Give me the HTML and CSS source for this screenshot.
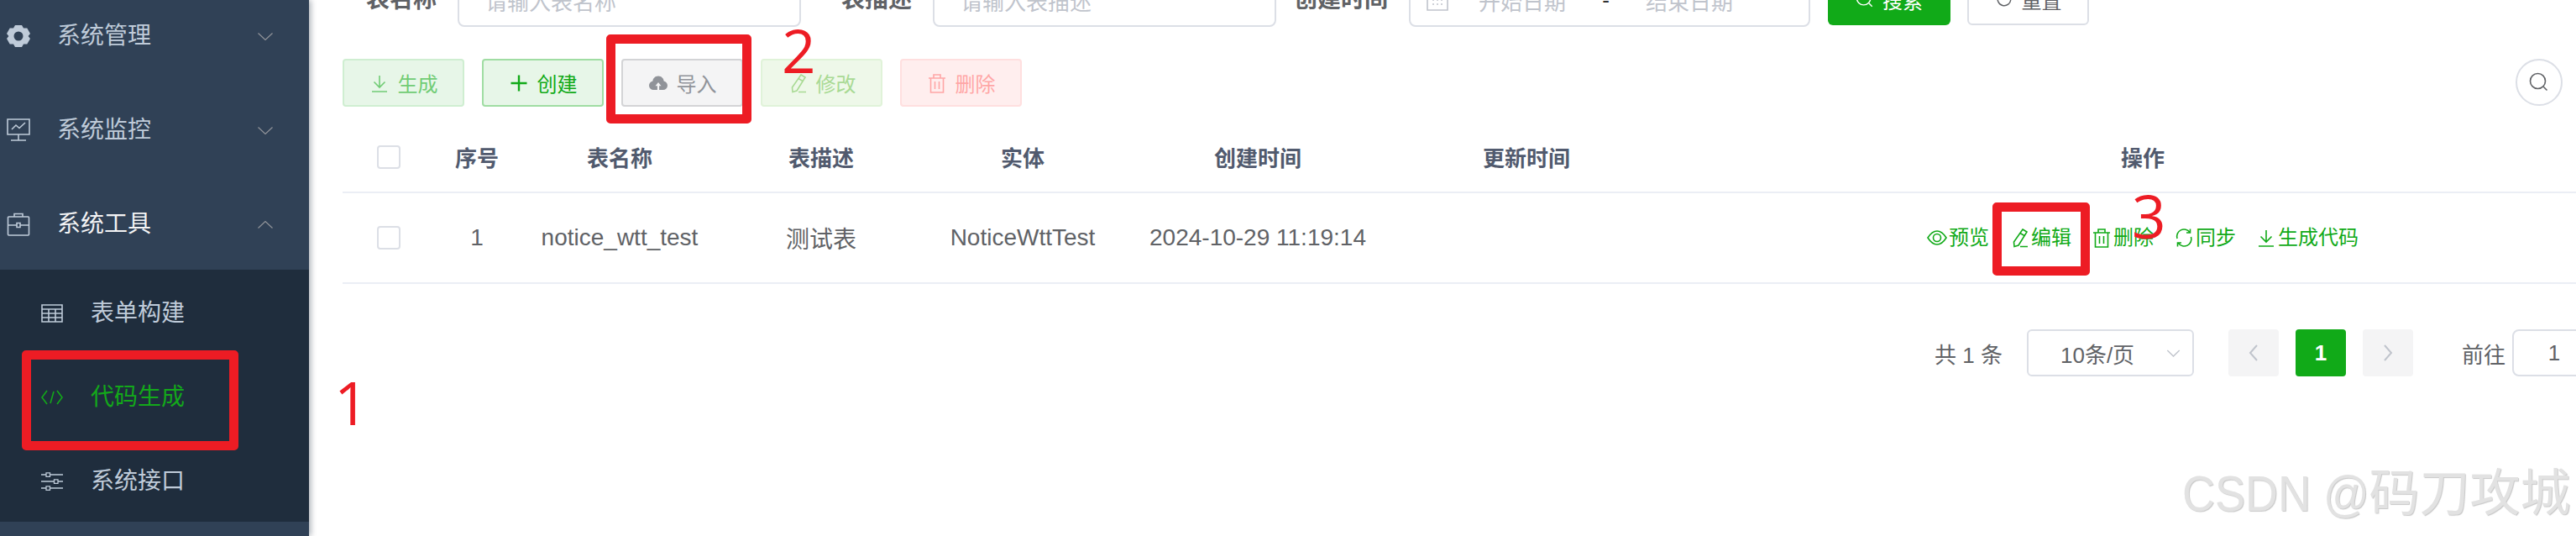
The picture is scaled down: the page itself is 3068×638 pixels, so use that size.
FILE: index.html
```html
<!DOCTYPE html>
<html lang="zh-CN">
<head>
<meta charset="utf-8">
<title>代码生成</title>
<link rel="stylesheet" href="styles.css">
</head>
<body>
<div class="app">
  <aside class="sidebar">
    <div class="menu-item"><svg class="mi" viewBox="0 0 28 28"><path fill="#bfcbd9" fill-rule="evenodd" d="M10 1h8l2 3.600 4.300 0 3.700 6.400-2.400 3 2.400 3-3.700 6.400-4.300 0-2 3.600h-8l-2-3.600-4.300 0-3.700-6.400 2.400-3-2.400-3 3.700-6.400 4.300 0zM14 8.500a5.500 5.500 0 1 0 0 11 5.500 5.500 0 0 0 0-11z"/></svg><span class="mt">系统管理</span><svg class="chev" viewBox="0 0 18 9"><path d="M.5.500 9 8.500 17.500.5"/></svg></div>
    <div class="menu-item"><svg class="mi" viewBox="0 0 28 28"><path class="st" d="M1 1h26v18H1zM14 19v7M5 26h18M6 13l5-5 4 3.500L22 5"/></svg><span class="mt">系统监控</span><svg class="chev" viewBox="0 0 18 9"><path d="M.5.500 9 8.500 17.500.5"/></svg></div>
    <div class="menu-item on"><svg class="mi" viewBox="0 0 28 28"><path class="st" d="M2.500 5h23a1 1 0 0 1 1 1v20a1 1 0 0 1-1 1h-23a1 1 0 0 1-1-1V6a1 1 0 0 1 1-1zM9 5V1.500h10V5M1.500 15h11M16 15h10.500M12 12.500h4v5h-4z"/></svg><span class="mt">系统工具</span><svg class="chev" viewBox="0 0 18 9"><path d="M.5 8.500 9 .5l8.500 8"/></svg></div>
    <div class="sub">
      <div class="sub-item"><svg class="si" viewBox="0 0 26 22"><path class="st" d="M1 1h24v20H1zM1 6h24M1 11h24M1 16h24M9 6v15M17 6v15"/></svg><span class="mt">表单构建</span></div>
      <div class="sub-item active"><svg class="si" viewBox="0 0 26 18"><path class="st" d="M7 1 1 9l6 8M19 1l6 8-6 8M15 2l-4 14"/></svg><span class="mt">代码生成</span></div>
      <div class="sub-item"><svg class="si" viewBox="0 0 26 22"><path class="st thin" d="M0 3h26M0 11h26M0 19h26"/><path class="knob" d="M6 .8h4.500v4.500H6zM15.500 8.800H20v4.500h-4.500zM6 16.800h4.500v4.500H6z"/></svg><span class="mt">系统接口</span></div>
    </div>
  </aside>

  <main class="main">
    <form class="search">
      <label class="lbl">表名称</label>
      <div class="field f1"><span class="ph">请输入表名称</span></div>
      <label class="lbl l2">表描述</label>
      <div class="field f2"><span class="ph">请输入表描述</span></div>
      <label class="lbl l3">创建时间</label>
      <div class="field f3">
        <svg class="cal" viewBox="0 0 26 26"><path class="st" d="M1 3h24v22H1zM1 9h24M7 13h2M12 13h2M17 13h2M7 18h2M12 18h2M17 18h2"/></svg>
        <span class="ph">开始日期</span><span class="dash">-</span><span class="ph">结束日期</span>
      </div>
      <div class="sbtn primary"><svg class="bi" viewBox="0 0 24 24"><path class="st" d="M17.500 17.500l4 4M10.500 1.500a9 9 0 1 0 0 18 9 9 0 0 0 0-18z"/></svg>搜索</div>
      <div class="sbtn plain"><svg class="bi" viewBox="0 0 24 24"><path class="st" d="M20.500 12a8.500 8.500 0 1 1-2.500-6M18 1.500V6h-4.500"/></svg>重置</div>
    </form>

    <div class="toolbar">
      <div class="btn b-gen"><svg class="bi" viewBox="0 0 24 24"><path class="st" d="M12 3v14M5.500 10.500l6.500 6.500 6.500-6.500M3 22h18"/></svg>生成</div>
      <div class="btn b-new"><svg class="bi" viewBox="0 0 24 24"><path class="st thick" d="M12 2.500v19M2.500 12h19"/></svg>创建</div>
      <div class="btn b-imp"><svg class="bi" viewBox="0 0 24 24"><path fill="currentColor" fill-rule="evenodd" d="M12 3.500c3.800 0 6.500 3 6.600 6 2.700.6 4.400 2.800 4.400 5.200a5.300 5.300 0 0 1-5.300 5.300H6.300A5.300 5.300 0 0 1 1 14.700c0-2.400 1.700-4.600 4.400-5.200.1-3 2.800-6 6.600-6zM12 11l-3.500 4.200h2.400V20h2.200v-4.800h2.400z"/></svg>导入</div>
      <div class="btn b-edit"><svg class="bi" viewBox="0 0 24 24"><path class="st" d="M16 2l5 3-10 16-5 1.500L5.500 17zM13 6.500l5 3M13 22.500h9"/></svg>修改</div>
      <div class="btn b-del"><svg class="bi" viewBox="0 0 24 24"><path class="st" d="M2 6h20M8 6V2h8v4M4.500 6v17h15V6M9.500 10v9M14.500 10v9"/></svg>删除</div>
      <div class="circle"><svg viewBox="0 0 24 24"><path class="st" d="M17.500 17.500l4 4M10.500 1.500a9 9 0 1 0 0 18 9 9 0 0 0 0-18z"/></svg></div>
    </div>

    <table class="grid">
      <colgroup>
        <col class="c1"><col class="c2"><col class="c3"><col class="c3"><col class="c3"><col class="c4"><col class="c4"><col>
      </colgroup>
      <thead>
        <tr><th><span class="check"></span></th><th>序号</th><th>表名称</th><th>表描述</th><th>实体</th><th>创建时间</th><th>更新时间</th><th>操作</th></tr>
      </thead>
      <tbody>
        <tr>
          <td><span class="check"></span></td><td>1</td><td>notice_wtt_test</td><td>测试表</td><td>NoticeWttTest</td><td>2024-10-29 11:19:14</td><td></td>
          <td>
            <div class="ops">
              <span class="op"><svg viewBox="0 0 24 24"><path class="st" d="M1 12C4.500 6.500 8 4 12 4s7.500 2.500 11 8c-3.500 5.500-7 8-11 8s-7.500-2.500-11-8zM12 7.500a4.500 4.500 0 1 0 0 9 4.500 4.500 0 0 0 0-9z"/></svg>预览</span>
              <span class="op"><svg viewBox="0 0 24 24"><path class="st" d="M16 2l5 3-10 16-5 1.500L5.500 17zM13 6.500l5 3M13 22.500h9"/></svg>编辑</span>
              <span class="op"><svg viewBox="0 0 24 24"><path class="st" d="M2 6h20M8 6V2h8v4M4.500 6v17h15V6M9.500 10v9M14.500 10v9"/></svg>删除</span>
              <span class="op"><svg viewBox="0 0 24 24"><path class="st" d="M4 13a8.500 8.500 0 0 1 15-7.500M20.500 11A8.500 8.500 0 0 1 5.500 18.500M19.500 1.500V6H15M4.500 22.500V18H9"/></svg>同步</span>
              <span class="op"><svg viewBox="0 0 24 24"><path class="st" d="M12 3v14M5.500 10.500l6.500 6.500 6.500-6.500M3 22h18"/></svg>生成代码</span>
            </div>
          </td>
        </tr>
      </tbody>
    </table>

    <div class="pager">
      <span class="total">共 1 条</span>
      <div class="psel">10条/页<svg viewBox="0 0 18 10"><path d="M1 1l8 8 8-8"/></svg></div>
      <div class="pbtn"><svg viewBox="0 0 12 20"><path d="M10 1 2 10l8 9"/></svg></div>
      <div class="pbtn cur">1</div>
      <div class="pbtn last"><svg viewBox="0 0 12 20"><path d="M2 1l8 9-8 9"/></svg></div>
      <span class="goto">前往</span>
      <div class="pinput">1</div>
      <span class="pageu">页</span>
    </div>
  </main>
</div>

<div class="mark m1"></div>
<div class="mark m2"></div>
<div class="mark m3"></div>
<span class="num n1">1</span>
<span class="num n2">2</span>
<span class="num n3">3</span>
<div class="wm"><span class="wm-l">CSDN @</span>码刀攻城</div>
</body>
</html>
```
FILE: styles.css
```css
* { box-sizing: border-box; }
html, body { margin: 0; height: 638px; overflow: hidden; background: #fff; }
body { position: relative; font-family: "Liberation Sans", "Noto Sans CJK SC", sans-serif; color: #606266; }
.st { fill: none; stroke: currentColor; stroke-width: 1.6; }
.st.thick { stroke-width: 2.4; }
.st.thin { stroke-width: 1.3; }
.knob { fill: #1f2d3d; stroke: currentColor; stroke-width: 1.3; }

.app { display: flex; width: 3068px; height: 638px; overflow: hidden; }

.sidebar { flex: 0 0 368px; height: 638px; background: #304156; box-shadow: 2px 0 7px rgba(0, 21, 41, .35); color: #bfcbd9; font-size: 28px; position: relative; z-index: 2; overflow: hidden; }
.menu-item { height: 112px; display: flex; align-items: center; padding-left: 8px; }
.menu-item:first-child { margin-top: -13px; }
.mi { width: 28px; height: 28px; margin-right: 32px; flex: none; }
.mt { line-height: 1; }
.chev { width: 18px; height: 9px; margin-left: auto; margin-right: 43px; }
.chev path { fill: none; stroke: #909399; stroke-width: 1.2; }
.menu-item.on .mt { color: #f4f4f5; }
.sub { background: #1f2d3d; height: 300px; margin-top: -2px; padding-top: 2px; }
.sub-item { height: 100px; display: flex; align-items: center; padding-left: 49px; }
.si { width: 26px; height: 22px; margin-right: 33px; flex: none; }
.active { color: #13a81a; }

.main { flex: 1; min-width: 0; padding-left: 40px; overflow: hidden; }

.search { display: flex; align-items: flex-start; height: 64px; margin-top: -32px; padding-left: 28px; }
.lbl { font-size: 28px; font-weight: 700; line-height: 64px; color: #606266; flex: none; }
.l2 { margin-left: 48px; }
.l3 { margin-left: 21px; }
.field { height: 64px; border: 2px solid #dcdfe6; border-radius: 8px; margin-left: 25px; padding-left: 31px; display: flex; align-items: center; font-size: 26px; flex: none; }
.f1, .f2 { width: 409px; }
.f3 { width: 478px; padding-left: 19px; }
.ph { color: #c0c4cc; white-space: nowrap; }
.cal { width: 26px; height: 26px; color: #c0c4cc; margin-right: 36px; flex: none; }
.dash { width: 95px; text-align: center; color: #303133; }
.sbtn { height: 62px; width: 146px; border-radius: 6px; display: flex; align-items: center; justify-content: center; gap: 10px; font-size: 24px; flex: none; }
.sbtn .bi { width: 22px; height: 22px; }
.primary { background: #11aa18; color: #fff; margin-left: 21px; }
.plain { border: 2px solid #dcdfe6; margin-left: 20px; color: #606266; width: 145px; }

.toolbar { display: flex; gap: 21px; margin-top: 38px; height: 57px; padding-right: 16px; font-size: 24px; position: relative; }
.btn { width: 145px; height: 57px; border: 2px solid; border-radius: 4px; display: flex; align-items: center; justify-content: center; gap: 10px; flex: none; }
.bi { width: 24px; height: 24px; flex: none; }
.b-gen { background: #e7f6e8; border-color: #cfeed1; color: #71cc75; }
.b-new { background: #e7f6e8; border-color: #a0dda3; color: #11aa18; }
.b-imp { background: #f4f4f5; border-color: #d3d4d6; color: #909399; }
.b-edit { background: #eef8e9; border-color: #e0f3d9; color: #a9da94; }
.b-del { background: #ffeeee; border-color: #ffdfdf; color: #ffa6a6; }
.circle { width: 56px; height: 56px; border: 2px solid #dcdfe6; border-radius: 50%; margin-left: auto; display: flex; align-items: center; justify-content: center; color: #606266; }
.circle svg { width: 24px; height: 24px; }

.grid { width: 2718px; margin-top: 18px; border-collapse: collapse; table-layout: fixed; }
.c1 { width: 110px; }
.c2 { width: 100px; }
.c3 { width: 240px; }
.c4 { width: 320px; }
.grid th { height: 84px; font-size: 26px; font-weight: 700; color: #515a6e; text-align: center; border-bottom: 2px solid #ebeef5; padding: 0; }
.grid td { height: 108px; font-size: 28px; color: #606266; text-align: center; border-bottom: 2px solid #ebeef5; padding: 0; white-space: nowrap; }
.check { display: block; width: 28px; height: 28px; border: 2px solid #dcdfe6; border-radius: 4px; margin: 0 auto; }
.ops { display: flex; justify-content: center; gap: 24px; font-size: 24px; color: #11aa18; }
.op { display: flex; align-items: center; gap: 2px; line-height: 1; }
.op svg { width: 24px; height: 24px; flex: none; }

.pager { width: 2718px; display: flex; justify-content: flex-end; align-items: center; height: 56px; margin-top: 54px; font-size: 26px; color: #606266; }
.total { margin-right: 29px; white-space: nowrap; }
.psel { width: 199px; height: 56px; border: 2px solid #dcdfe6; border-radius: 6px; display: flex; align-items: center; padding-left: 38px; margin-right: 41px; position: relative; }
.psel svg { width: 17px; height: 9px; position: absolute; right: 14px; top: 22px; }
.psel path { fill: none; stroke: #c0c4cc; stroke-width: 1.5; }
.pbtn { width: 60px; height: 56px; background: #f4f4f5; border-radius: 4px; margin-right: 20px; display: flex; align-items: center; justify-content: center; font-weight: 700; }
.pbtn svg { width: 12px; height: 20px; }
.pbtn path { fill: none; stroke: #c0c4cc; stroke-width: 2; }
.pbtn.cur { background: #11aa18; color: #fff; }
.pbtn.last { margin-right: 58px; }
.goto { margin-right: 8px; white-space: nowrap; }
.pinput { width: 100px; height: 56px; border: 2px solid #dcdfe6; border-radius: 8px; display: flex; align-items: center; justify-content: center; flex: none; }
.pageu { margin-left: 8px; }

.mark { position: absolute; border: 11px solid #ed1c24; border-radius: 5px; z-index: 5; }
.m1 { left: 26px; top: 417px; width: 258px; height: 119px; }
.m2 { left: 722px; top: 41px; width: 173px; height: 106px; }
.m3 { left: 2373px; top: 241px; width: 116px; height: 87px; }
.num { position: absolute; color: #ed1c24; font-family: "Open Sans", "Liberation Sans", sans-serif; font-weight: 400; font-size: 71px; line-height: 1; z-index: 6; }
.n1 { left: 398px; top: 443px; }
.n2 { left: 931px; top: 24px; }
.n3 { left: 2539px; top: 221px; }
.wm { position: absolute; left: 2599px; top: 552px; font-size: 60px; line-height: 72px; color: #e2e2e2; text-shadow: 1px 1px 1px #c8c8c8; white-space: nowrap; z-index: 7; }
.wm-l { display: inline-block; transform: scaleX(.9); transform-origin: left; margin-right: -25px; }
```
